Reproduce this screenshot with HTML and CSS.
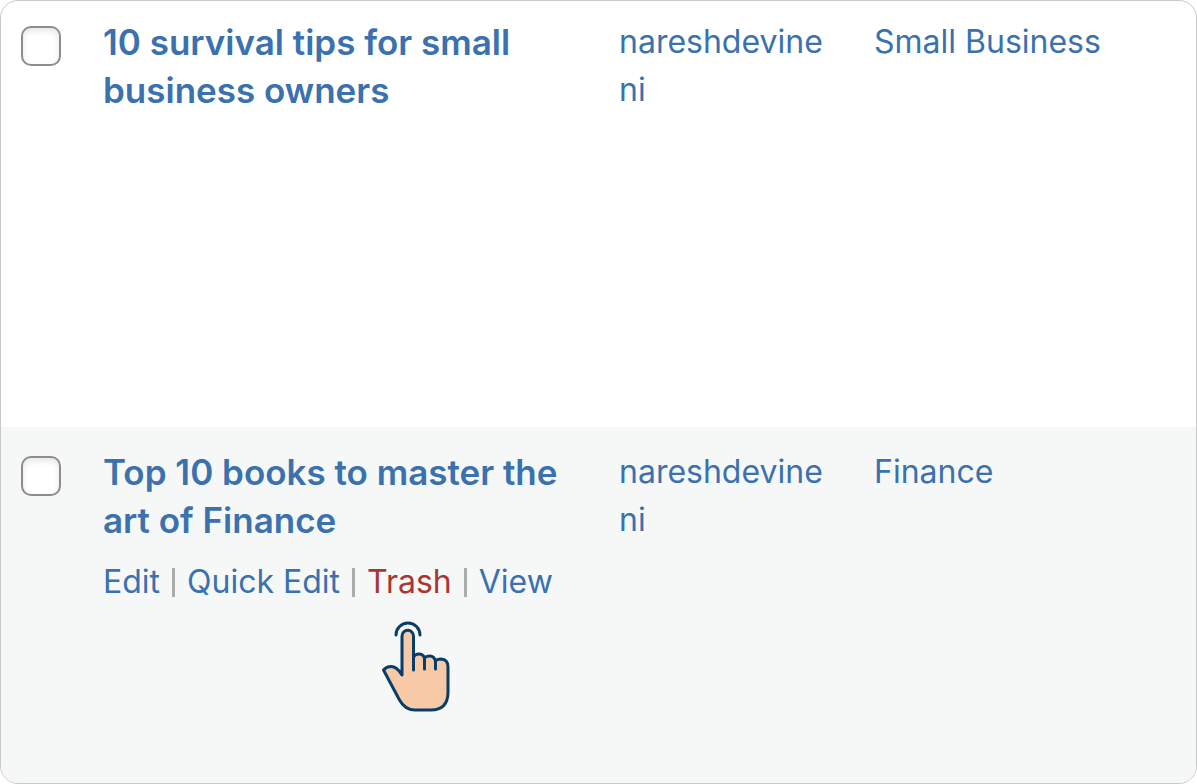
FILE: index.html
```html
<!DOCTYPE html>
<html lang="en">
<head>
    <meta charset="UTF-8">
    <meta name="viewport" content="width=device-width, initial-scale=1.0">
    <title>Posts</title>
    <link rel="stylesheet" href="styles.css">
</head>
<body>
    <div class="posts-container">
        <table class="posts-table">
            <colgroup>
                <col class="col-check">
                <col class="col-title">
                <col class="col-author">
                <col class="col-category">
            </colgroup>
            <tbody>
                <tr class="post-row">
                    <td class="check-cell"><input type="checkbox" id="post-1" aria-labelledby="title-1"></td>
                    <td><a class="post-title" id="title-1" href="#">10 survival tips for small business owners</a></td>
                    <td><a href="#">nareshdevineni</a></td>
                    <td><a href="#">Small Business</a></td>
                </tr>
                <tr class="post-row alternate">
                    <td class="check-cell"><input type="checkbox" id="post-2" aria-labelledby="title-2"></td>
                    <td>
                        <a class="post-title" id="title-2" href="#">Top 10 books to master the art of Finance</a>
                        <div class="row-actions">
                            <a href="#">Edit</a>
                            <span class="divider"></span>
                            <a href="#">Quick Edit</a>
                            <span class="divider"></span>
                            <span class="trash">
                                <a href="#">Trash</a>
                                <svg class="pointer" width="70" height="92" viewBox="0 0 70 92" aria-hidden="true">
                                    <path class="tap" d="M15 14 A12 12 0 0 1 39 14"/>
                                    <path class="hand" d="M21 54 V15 A5.700 5.700 0 0 1 32.500 15 V36 Q34 33 38 33 Q42 33 43.500 37 Q45 35 49 35 Q53 35 54.500 40 Q56 38 60 38 Q67 38.500 67 46 V72 Q66.500 89 50 89 H34 Q24 89 18.500 79 L2.500 49 Q5.500 45.500 10 45.500 Q16 45.500 21 54 Z"/>
                                    <path class="fingers" d="M32.500 36 V49 M43.500 37 V48 M54.500 39 V48"/>
                                </svg>
                            </span>
                            <span class="divider"></span>
                            <a href="#">View</a>
                        </div>
                    </td>
                    <td><a href="#">nareshdevineni</a></td>
                    <td><a href="#">Finance</a></td>
                </tr>
            </tbody>
        </table>
    </div>
</body>
</html>
```
FILE: styles.css
```css
* {
    box-sizing: border-box;
}

body {
    font-family: Inter, "Liberation Sans", sans-serif;
    font-size: 32px;
    line-height: 48px;
    background-color: #fff;
    margin: 0;
}

a {
    color: #3a71ae;
    text-decoration: none;
}

a:hover {
    color: #135e96;
}

.posts-container {
    display: flex;
    min-height: 100vh;
    border: 1px solid #c9c9c9;
    border-radius: 18px;
    overflow: hidden;
}

.posts-table {
    width: 100%;
    table-layout: fixed;
    border-collapse: collapse;
}

.col-check {
    width: 82px;
}

.col-author {
    width: 255px;
}

.col-category {
    width: 342px;
}

.post-row {
    height: 426px;
}

.post-row td {
    padding: 17px 20px;
    vertical-align: top;
    overflow-wrap: break-word;
}

.post-row.alternate {
    height: 356px;
    background-color: #f6f8f8;
}

.post-row.alternate td {
    padding-top: 21px;
}

.check-cell input {
    appearance: none;
    display: block;
    width: 40px;
    height: 40px;
    margin: 8px 0;
    border: 2px solid #8c8c91;
    border-radius: 10px;
    background-color: #fff;
    box-shadow: inset 0 3px 6px rgba(0, 0, 0, 0.1);
}

.check-cell input:checked {
    background-color: #3a71ae;
}

.post-title {
    display: block;
    font-size: 35px;
    font-weight: 600;
}

.row-actions {
    display: flex;
    align-items: center;
    gap: 12px;
    margin-top: 14px;
    white-space: nowrap;
}

.divider {
    width: 3px;
    height: 29px;
    background-color: #a9abae;
}

.trash {
    position: relative;
}

.trash a {
    color: #a93634;
}

/* hand pointing at the trash link */
.pointer {
    position: absolute;
    top: 63px;
    left: 14px;
    fill: none;
    stroke: #073d68;
    stroke-width: 3;
    stroke-linecap: round;
    stroke-linejoin: round;
}

.pointer .hand {
    fill: #f7c9a6;
}
```
